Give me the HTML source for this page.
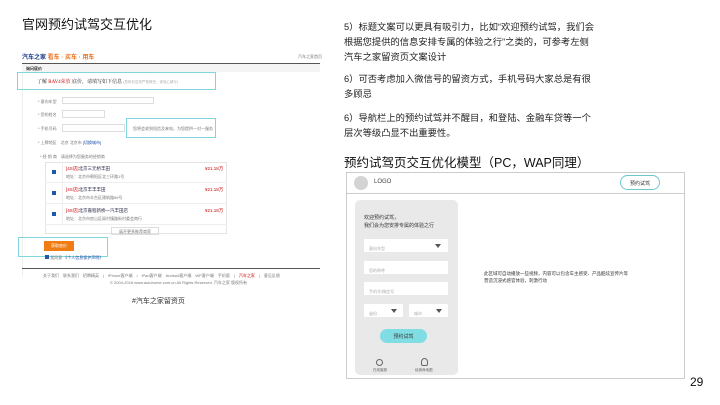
<!DOCTYPE html>
<html><head><meta charset="utf-8"><style>
*{margin:0;padding:0;box-sizing:border-box}
body{width:720px;height:405px;background:#fff;position:relative;overflow:hidden;font-family:"Liberation Sans","Noto Sans CJK SC",sans-serif;color:#222}
.a{position:absolute;white-space:nowrap}
.s{font-size:4px;color:#777}
.in{position:absolute;background:#fff;border:1px solid #ddd}
.box{position:absolute;border:1px solid #7fd6dc}
.wi{position:absolute;background:#fff;font-size:4px;color:#aaa;padding:7px 0 0 5px}
.tri{position:absolute;width:0;height:0;border-left:3px solid transparent;border-right:3px solid transparent;border-top:4px solid #555}
</style></head><body>
<div class="a" style="left:22px;top:14px;font-size:13px;color:#111">官网预约试驾交互优化</div>

<!-- left screenshot -->
<div class="a" style="left:22px;top:52px;font-size:6px;font-weight:bold;color:#1a3a8a">汽车之家 <span style="color:#e8701a">看车 · 买车 · 用车</span></div>
<div class="a s" style="left:298px;top:54px">汽车之家首页</div>
<div class="a" style="left:22px;top:63px;width:298px;height:1px;background:#555"></div>
<div class="a" style="left:22px;top:64px;width:298px;height:8px;background:#f4f4f4"></div>
<div class="a" style="left:26px;top:66px;font-size:4px;font-weight:bold">询问底价</div>
<div class="a" style="left:22px;top:72px;width:298px;height:204px;border-left:1px solid #eee"></div>
<div class="a" style="left:37px;top:78px;font-size:5px;font-family:'Liberation Serif','Noto Serif CJK SC',serif">了解 <span style="color:#c00">RAV4荣放</span> 底价，请填写如下信息 <span style="font-size:3.5px;color:#999">(您的信息将严格保密，请放心填写)</span></div>
<div class="box" style="left:17px;top:72px;width:199px;height:18px"></div>
<div class="a s" style="left:38px;top:99px">* 意向车型</div><div class="in" style="left:62px;top:97px;width:92px;height:7px"></div>
<div class="a s" style="left:38px;top:112px">* 您的姓名</div><div class="in" style="left:62px;top:110px;width:43px;height:8px"></div>
<div class="a s" style="left:38px;top:126px">* 手机号码</div><div class="in" style="left:62px;top:124px;width:63px;height:8px"></div>
<div class="a s" style="left:133px;top:126px">您将会收到短信及来电，为您提供一对一服务</div>
<div class="box" style="left:126px;top:118px;width:90px;height:20px"></div>
<div class="a s" style="left:38px;top:140px">* 上牌地区　北京 北京市 <span style="color:#1a4aa0">[切换城市]</span></div>
<div class="a s" style="left:40px;top:154px">* 经 销 商　请选择为您服务的经销商</div>
<div class="a" style="left:45px;top:162px;width:182px;height:72px;border:1px solid #e4e4e4"></div>
<div class="a" style="left:62px;top:162px;width:1px;height:62px;background:#eee"></div>
<div class="a" style="left:45px;top:182px;width:182px;height:1px;background:#eee"></div>
<div class="a" style="left:45px;top:203px;width:182px;height:1px;background:#eee"></div>
<div class="a" style="left:45px;top:224px;width:182px;height:1px;background:#eee"></div>
<div class="a" style="left:52px;top:170px;width:4px;height:4px;background:#1a5aa8"></div>
<div class="a" style="left:52px;top:191px;width:4px;height:4px;background:#1a5aa8"></div>
<div class="a" style="left:52px;top:212px;width:4px;height:4px;background:#1a5aa8"></div>
<div class="a" style="left:66px;top:166px;font-size:4.5px;color:#224"><span style="color:#c00">[4S店]</span>北京三元桥丰田</div><div class="a s" style="left:66px;top:174px">地址：北京市朝阳区北三环路1号</div>
<div class="a" style="left:66px;top:187px;font-size:4.5px;color:#224"><span style="color:#c00">[4S店]</span>北京丰丰丰田</div><div class="a s" style="left:66px;top:195px">地址：北京市丰台区建筑路89号</div>
<div class="a" style="left:66px;top:208px;font-size:4.5px;color:#224"><span style="color:#c00">[4S店]</span>北京嘉程新桥一汽丰田店</div><div class="a s" style="left:66px;top:216px">地址：北京市房山区阎村镇路街村委会南行</div>
<div class="a" style="left:205px;top:166px;font-size:4.5px;color:#c00">¥21.18万</div>
<div class="a" style="left:205px;top:187px;font-size:4.5px;color:#c00">¥21.18万</div>
<div class="a" style="left:205px;top:208px;font-size:4.5px;color:#c00">¥21.18万</div>
<div class="a s" style="left:111px;top:227px;width:48px;height:8px;border:1px solid #ddd;text-align:center;padding-top:1px">展开更多推荐商家</div>
<div class="a" style="left:44px;top:241px;width:30px;height:10px;background:#ef7d14;color:#fff;font-size:4px;text-align:center;padding-top:2px">获取底价</div>
<div class="box" style="left:18px;top:237px;width:90px;height:20px"></div>
<div class="a s" style="left:45px;top:255px"><span style="display:inline-block;width:4px;height:4px;background:#1a5aa8"></span> 我同意 <span style="color:#1a4aa0">《个人信息保护声明》</span></div>
<div class="a" style="left:22px;top:268px;width:298px;height:1px;background:#555"></div>
<div class="a s" style="left:43px;top:273px">关于我们　联系我们　招聘精英　|　iPhone客户端　/　iPad客户端　Android客户端　WP客户端　手机版　|　<span style="color:#c00">汽车之家</span>　|　意见反馈</div>
<div class="a s" style="left:110px;top:280px">© 2004-2016 www.autohome.com.cn All Rights Reserved. 汽车之家 版权所有</div>
<div class="a" style="left:132px;top:296px;font-size:7px;color:#333">#汽车之家留资页</div>

<!-- right text -->
<div class="a" style="left:344px;top:20px;font-size:9.3px;line-height:15px;color:#222">5）标题文案可以更具有吸引力，比如“欢迎预约试驾，我们会<br>根据您提供的信息安排专属的体验之行”之类的，可参考左侧<br>汽车之家留资页文案设计</div>
<div class="a" style="left:344px;top:72px;font-size:9.3px;line-height:15px">6）可否考虑加入微信号的留资方式，手机号码大家总是有很<br>多顾忌</div>
<div class="a" style="left:344px;top:111px;font-size:9.3px;line-height:15px">6）导航栏上的预约试驾并不醒目，和登陆、金融车贷等一个<br>层次等级凸显不出重要性。</div>
<div class="a" style="left:344px;top:152px;font-size:12.5px;color:#111">预约试驾页交互优化模型（PC，WAP同理）</div>

<!-- wireframe -->
<div class="a" style="left:346px;top:172px;width:339px;height:207px;border:1px solid #ccc"></div>
<div class="a" style="left:347px;top:193px;width:337px;height:1px;background:#ccc"></div>
<div class="a" style="left:354px;top:176px;width:14px;height:14px;border-radius:50%;background:#d4d4d4"></div>
<div class="a" style="left:374px;top:179px;font-size:6px;color:#444">LOGO</div>
<div class="a" style="left:620px;top:175px;width:40px;height:15px;border:1px solid #6cc8cc;border-radius:8px;font-size:5px;text-align:center;padding-top:4px;color:#333">预约试驾</div>
<div class="a" style="left:355px;top:200px;width:103px;height:175px;background:#e9e9e9;border-radius:5px"></div>
<div class="a" style="left:364px;top:214px;font-size:5px;line-height:8px;color:#333">欢迎预约试驾，<br>我们会为您安排专属的体验之行</div>
<div class="wi" style="left:364px;top:239px;width:84px;height:13px">意向车型</div><div class="tri" style="left:435px;top:244px"></div>
<div class="wi" style="left:364px;top:261px;width:84px;height:13px">您的称呼</div>
<div class="wi" style="left:364px;top:282px;width:84px;height:13px">手机号/微信号</div>
<div class="wi" style="left:364px;top:304px;width:39px;height:13px">省份</div><div class="tri" style="left:391px;top:309px"></div>
<div class="wi" style="left:409px;top:304px;width:39px;height:13px">城市</div><div class="tri" style="left:436px;top:309px"></div>
<div class="a" style="left:380px;top:329px;width:47px;height:14px;background:#7fdde3;border-radius:7px;font-size:5px;text-align:center;padding-top:4px;color:#333">预约试驾</div>
<div class="a" style="left:376px;top:359px;width:7px;height:7px;border:1px solid #666;border-radius:50%"></div>
<div class="a" style="left:421px;top:358px;width:7px;height:8px;border:1px solid #666;border-radius:50% 50% 2px 2px"></div>
<div class="a" style="left:373px;top:368px;font-size:3.5px;color:#666">在线客服</div>
<div class="a" style="left:415px;top:368px;font-size:3.5px;color:#666">经销商地图</div>
<div class="a" style="left:484px;top:270px;font-size:4.5px;line-height:7px;color:#333">此区域可自动播放一些视频，内容可以包含车主感受、产品酷炫宣传片等<br>营造沉浸式感官体验，刺激行动</div>
<div class="a" style="left:690px;top:375px;font-size:12px;color:#111">29</div>
</body></html>
